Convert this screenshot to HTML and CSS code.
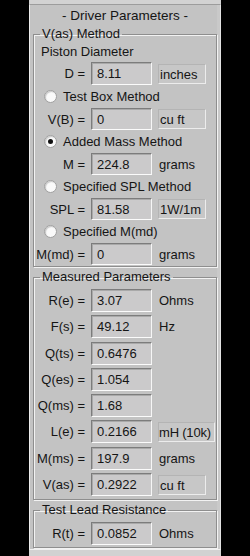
FILE: index.html
```html
<!DOCTYPE html>
<html>
<head>
  <title>Driver Parameters</title>
  <link rel="stylesheet" href="styles.css">
</head>
<body>
  <div class="frame">
    <div class="panel">
      <div class="title">- Driver Parameters -</div>

      <fieldset class="group group-vas">
        <legend>V(as) Method</legend>
        <div class="caption">Piston Diameter</div>
        <div class="row row-d">
          <label>D =</label>
          <input type="text" value="8.11">
          <span class="unit boxed">inches</span>
        </div>
        <label class="option"><input type="radio" name="method"> Test Box Method</label>
        <div class="row">
          <label>V(B) =</label>
          <input type="text" value="0">
          <span class="unit boxed">cu ft</span>
        </div>
        <label class="option"><input type="radio" name="method" checked> Added Mass Method</label>
        <div class="row">
          <label>M =</label>
          <input type="text" value="224.8">
          <span class="unit">grams</span>
        </div>
        <label class="option"><input type="radio" name="method"> Specified SPL Method</label>
        <div class="row">
          <label>SPL =</label>
          <input type="text" value="81.58">
          <span class="unit boxed">1W/1m</span>
        </div>
        <label class="option"><input type="radio" name="method"> Specified M(md)</label>
        <div class="row">
          <label>M(md) =</label>
          <input type="text" value="0">
          <span class="unit">grams</span>
        </div>
      </fieldset>

      <fieldset class="group group-measured">
        <legend>Measured Parameters</legend>
        <div class="rows">
          <div class="row"><label>R(e) =</label><input type="text" value="3.07"><span class="unit">Ohms</span></div>
          <div class="row"><label>F(s) =</label><input type="text" value="49.12"><span class="unit">Hz</span></div>
          <div class="row"><label>Q(ts) =</label><input type="text" value="0.6476"></div>
          <div class="row"><label>Q(es) =</label><input type="text" value="1.054"></div>
          <div class="row"><label>Q(ms) =</label><input type="text" value="1.68"></div>
          <div class="row"><label>L(e) =</label><input type="text" value="0.2166"><span class="unit boxed wide">mH (10k)</span></div>
          <div class="row"><label>M(ms) =</label><input type="text" value="197.9"><span class="unit">grams</span></div>
          <div class="row"><label>V(as) =</label><input type="text" value="0.2922"><span class="unit boxed">cu ft</span></div>
        </div>
      </fieldset>

      <fieldset class="group group-lead">
        <legend>Test Lead Resistance</legend>
        <div class="row"><label>R(t) =</label><input type="text" value="0.0852"><span class="unit">Ohms</span></div>
      </fieldset>
    </div>
  </div>
</body>
</html>
```

FILE: styles.css
```css
/* Driver parameters panel */
body {
  margin: 0;
  background-color: #000;
  font-family: "Liberation Sans", Arial, sans-serif;
  font-size: 13px;
  color: #151515;
}

.frame {
  width: 192px;
  height: 556px;
  margin-left: 29px;
  padding-top: 4px;
  box-sizing: border-box;
  background-color: #d2d2d2;
}

.panel {
  height: 546px;
  box-sizing: border-box;
  background-color: #c3c3c3;
  border-top: 1px solid #9c9c9c;
  border-left: 1px solid #ececec;
  border-right: 1px solid #e2e2e2;
  border-bottom: 1px solid #f0f0f0;
  box-shadow: inset -3px 0 0 #c9c9c9;
}

.title {
  height: 21px;
  line-height: 21px;
  text-align: center;
  font-size: 13.5px;
}

.group {
  margin: 0 3px;
  padding: 0;
  border: 1px solid #8e8e8e;
  box-shadow: 1px 1px 0 #f2f2f2, inset 1px 1px 0 #f2f2f2;
}

.group legend {
  margin-left: 6px;
  padding: 0 2px;
  line-height: 16px;
}

.group-vas {
  padding-bottom: 1px;
}

.group-measured {
  margin-top: 2px;
  padding: 4px 0 3px;
}

.group-lead {
  margin-top: 2px;
  padding: 4px 0 2px;
}

.caption {
  padding: 2px 0 0 7px;
  line-height: 16px;
  height: 16px;
  margin-bottom: 2px;
}

.rows {
  display: flex;
  flex-direction: column;
  gap: 3.3px;
}

.row {
  display: flex;
  align-items: center;
  height: 22px;
}

.rows .row,
.group-lead .row,
.row-d {
  height: 23px;
}

.row label {
  display: flex;
  justify-content: flex-end;
  width: 51px;
  flex-shrink: 0;
  white-space: nowrap;
}

.row input[type="text"] {
  width: 61px;
  height: 100%;
  box-sizing: border-box;
  margin: 0 0 0 6px;
  padding: 0 0 0 5px;
  font: inherit;
  color: inherit;
  background-color: #cbcacb;
  border-top: 1px solid #7c7c7c;
  border-left: 1px solid #7c7c7c;
  border-right: 1px solid #f6f6f6;
  border-bottom: 1px solid #fbfbfb;
  box-shadow: inset 1px 1px 0 #a9a9a9;
  outline: none;
}

.unit {
  margin-left: 6px;
  padding-left: 1px;
  white-space: nowrap;
}

.unit.boxed {
  width: 48px;
  height: 20px;
  line-height: 20px;
  box-sizing: border-box;
  background-color: #c7c7c7;
  border-top: 1px solid #b4b4b4;
  border-left: 1px solid #b4b4b4;
  border-right: 1px solid #ececec;
  border-bottom: 1px solid #ececec;
}

.unit.wide {
  width: 57px;
  padding-left: 0;
  letter-spacing: -0.2px;
}

.option {
  display: flex;
  align-items: center;
  height: 23px;
  padding-left: 10px;
}

.option input[type="radio"] {
  appearance: none;
  width: 13px;
  height: 13px;
  margin: 0 6px 0 0;
  border-radius: 50%;
  background-color: #fafafa;
  border: 1px solid #a0a0a0;
  box-shadow: inset 1px 1px 1px #c8c8c8;
  position: relative;
}

.option input[type="radio"]:checked::after {
  content: "";
  position: absolute;
  left: 3px;
  top: 3px;
  width: 5px;
  height: 5px;
  border-radius: 50%;
  background-color: #111;
}
```
